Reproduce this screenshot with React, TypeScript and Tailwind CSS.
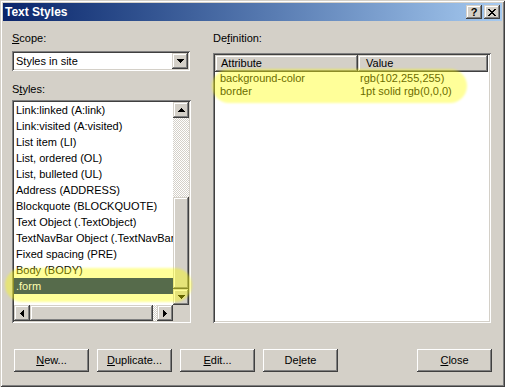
import React from "react";

const BTN =
  "shadow-[inset_-1px_-1px_#404040,inset_1px_1px_#ffffff,inset_-2px_-2px_#808080,inset_2px_2px_#d4d0c8]";
const SCR =
  "shadow-[inset_-1px_-1px_#404040,inset_1px_1px_#d4d0c8,inset_-2px_-2px_#808080,inset_2px_2px_#ffffff]";
const SUNKEN =
  "shadow-[inset_1px_1px_#808080,inset_-1px_-1px_#ffffff,inset_2px_2px_#404040,inset_-2px_-2px_#d4d0c8]";
const CHECK =
  "bg-[repeating-conic-gradient(#d4d0c8_0%_25%,#ffffff_0%_50%)] bg-[length:2px_2px]";

function Arrow({ dir }: { dir: "up" | "down" | "left" | "right" }) {
  const rows: [number, number][] = [
    [3, 1],
    [2, 3],
    [1, 5],
    [0, 7],
  ];
  const vertical = dir === "up" || dir === "down";
  return (
    <svg
      width={vertical ? 7 : 4}
      height={vertical ? 4 : 7}
      shapeRendering="crispEdges"
      fill="#000"
    >
      {rows.map(([o, w], i) => {
        if (dir === "up") return <rect key={i} x={o} y={i} width={w} height={1} />;
        if (dir === "down") return <rect key={i} x={o} y={3 - i} width={w} height={1} />;
        if (dir === "left") return <rect key={i} x={i} y={o} width={1} height={w} />;
        return <rect key={i} x={3 - i} y={o} width={1} height={w} />;
      })}
    </svg>
  );
}

function ScrollBtn({ dir, className = "" }: { dir: "up" | "down" | "left" | "right"; className?: string }) {
  return (
    <div className={`w-[16px] h-[16px] shrink-0 bg-[#d4d0c8] flex items-center justify-center ${SCR} ${className}`}>
      <Arrow dir={dir} />
    </div>
  );
}

function Label({ pre, u, post, className = "" }: { pre: string; u: string; post: string; className?: string }) {
  return (
    <div className={`h-[13px] leading-[13px] text-[11px] text-black whitespace-pre ${className}`}>
      {pre}
      <span className="underline underline-offset-[1px]">{u}</span>
      {post}
    </div>
  );
}

function Button({ pre, u, post, className = "" }: { pre: string; u: string; post: string; className?: string }) {
  return (
    <div
      className={`w-[75px] h-[23px] shrink-0 bg-[#d4d0c8] flex items-center justify-center text-[11px] text-black whitespace-pre ${BTN} ${className}`}
    >
      <span>
        {pre}
        <span className="underline underline-offset-[1px]">{u}</span>
        {post}
      </span>
    </div>
  );
}

const items = [
  "Link:linked (A:link)",
  "Link:visited (A:visited)",
  "List item (LI)",
  "List, ordered (OL)",
  "List, bulleted (UL)",
  "Address (ADDRESS)",
  "Blockquote (BLOCKQUOTE)",
  "Text Object (.TextObject)",
  "TextNavBar Object (.TextNavBar Object)",
  "Fixed spacing (PRE)",
  "Body (BODY)",
  ".form",
];

export default function App() {
  return (
    <div
      className={`relative w-[505px] h-[387px] bg-[#d4d0c8] p-[3px] flex flex-col overflow-hidden font-['Liberation_Sans',Arial,sans-serif] shadow-[inset_1px_1px_#d4d0c8,inset_-1px_-1px_#404040,inset_2px_2px_#ffffff,inset_-2px_-2px_#808080]`}
    >
      {/* Title bar */}
      <div className="h-[18px] shrink-0 flex items-center bg-gradient-to-r from-[#0a246a] to-[#a6caf0] pl-[2px] pr-[2px]">
        <div className="flex-1 text-white font-bold text-[12px] leading-[18px]">Text Styles</div>
        <div className={`w-[16px] h-[14px] bg-[#d4d0c8] flex items-center justify-center text-[11px] font-bold leading-none text-black ${SCR}`}>
          ?
        </div>
        <div className={`ml-[2px] w-[16px] h-[14px] bg-[#d4d0c8] flex items-center justify-center ${SCR}`}>
          <svg width="8" height="7" shapeRendering="crispEdges" fill="#000">
            <rect x="0" y="0" width="2" height="1" />
            <rect x="6" y="0" width="2" height="1" />
            <rect x="1" y="1" width="2" height="1" />
            <rect x="5" y="1" width="2" height="1" />
            <rect x="2" y="2" width="4" height="1" />
            <rect x="3" y="3" width="2" height="1" />
            <rect x="2" y="4" width="4" height="1" />
            <rect x="1" y="5" width="2" height="1" />
            <rect x="5" y="5" width="2" height="1" />
            <rect x="0" y="6" width="2" height="1" />
            <rect x="6" y="6" width="2" height="1" />
          </svg>
        </div>
      </div>

      {/* Body */}
      <div className="flex pl-[9px] pt-[11px]">
        {/* Left column */}
        <div className="w-[179px] flex flex-col">
          <Label pre="" u="S" post="cope:" />
          <div className={`mt-[6px] w-[178px] h-[20px] bg-white p-[2px] flex ${SUNKEN}`}>
            <div className="flex-1 pl-[2px] text-[11px] leading-[16px] text-black">Styles in site</div>
            <ScrollBtn dir="down" />
          </div>
          <Label pre="S" u="t" post="yles:" className="mt-[12px]" />
          <div className={`mt-[4px] h-[223px] bg-white p-[2px] flex flex-col ${SUNKEN}`}>
            <div className="flex h-[203px]">
              <div className="w-[159px] overflow-hidden">
                {items.map((t, i) =>
                  t === ".form" ? (
                    <div
                      key={i}
                      className="relative z-10 h-[16px] leading-[16px] pl-[2px] text-[11px] whitespace-nowrap bg-[#566b4b] text-[#ffffb0]"
                    >
                      {t}
                    </div>
                  ) : (
                    <div key={i} className="h-[16px] leading-[16px] pl-[2px] text-[11px] whitespace-nowrap text-black">
                      {t}
                    </div>
                  )
                )}
              </div>
              <div className="w-[16px] flex flex-col">
                <ScrollBtn dir="up" />
                <div className={`h-[79px] ${CHECK}`} />
                <div className={`h-[92px] bg-[#d4d0c8] ${SCR}`} />
                <ScrollBtn dir="down" />
              </div>
            </div>
            <div className="flex h-[16px]">
              <ScrollBtn dir="left" />
              <div className={`w-[123px] h-[16px] bg-[#d4d0c8] ${SCR}`} />
              <div className={`w-[4px] h-[16px] ${CHECK}`} />
              <ScrollBtn dir="right" />
              <div className="w-[16px] h-[16px] bg-[#d4d0c8]" />
            </div>
          </div>
        </div>

        {/* Right column */}
        <div className="ml-[22px] w-[278px] flex flex-col">
          <Label pre="De" u="f" post="inition:" />
          <div className={`mt-[8px] h-[270px] bg-white p-[2px] flex flex-col ${SUNKEN}`}>
            <div className="flex h-[17px] shrink-0">
              <div className={`w-[143px] h-[17px] bg-[#d4d0c8] pl-[6px] text-[11px] leading-[16px] text-black ${SCR}`}>
                Attribute
              </div>
              <div className={`w-[130px] h-[17px] bg-[#d4d0c8] pl-[8px] text-[11px] leading-[16px] text-black ${SCR}`}>
                Value
              </div>
            </div>
            <div className="grid grid-cols-[143px_1fr] text-[11px] leading-[13px] text-black">
              <div className="pl-[5px]">background-color</div>
              <div className="pl-[2px]">rgb(102,255,255)</div>
              <div className="pl-[5px]">border</div>
              <div className="pl-[2px]">1pt solid rgb(0,0,0)</div>
            </div>
          </div>
        </div>
      </div>

      {/* Buttons */}
      <div className="flex pl-[11px] mt-[26px] gap-[8px]">
        <Button pre="" u="N" post="ew..." />
        <Button pre="" u="D" post="uplicate..." />
        <Button pre="" u="E" post="dit..." />
        <Button pre="De" u="l" post="ete" />
        <Button pre="" u="C" post="lose" className="ml-[71px]" />
      </div>

      {/* Yellow highlight overlays */}
      <div className="absolute left-[5px] top-[268px] w-[187px] h-[34px] rounded-full bg-[#ffff00]/40 blur-[1px]" />
      <div className="absolute left-[212px] top-[69px] w-[255px] h-[34px] rounded-full bg-[#ffff00]/40 blur-[1px]" />
    </div>
  );
}
